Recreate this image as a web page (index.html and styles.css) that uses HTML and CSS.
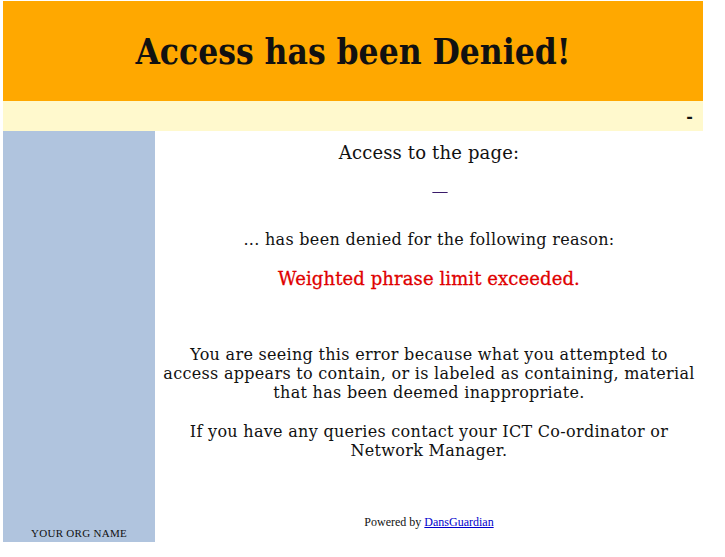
FILE: index.html
```html
<!DOCTYPE html>
<html>
<head>
<meta charset="utf-8">
<title>Access Denied</title>
<link rel="stylesheet" href="styles.css">
</head>
<body>
<div class="page">
  <header class="banner"><h1 class="title">Access has been Denied!</h1></header>
  <div class="userbar"><span class="user">-</span></div>
  <aside class="side"><span class="org">YOUR ORG NAME</span></aside>
  <main class="content">
    <p class="line first">Access to the page:</p>
    <p class="urlline"><a class="url" href="#">&nbsp;&nbsp;&nbsp;&nbsp;</a></p>
    <p class="line denied">... has been denied for the following reason:</p>
    <p class="reason">Weighted phrase limit exceeded.</p>
    <p class="line para">You are seeing this error because what you attempted to access appears to contain, or is labeled as containing, material that has been deemed inappropriate.</p>
    <p class="line para2">If you have any queries contact your ICT Co-ordinator or Network Manager.</p>
    <p class="powered">Powered by <a href="#">DansGuardian</a></p>
  </main>
</div>
</body>
</html>
```

FILE: styles.css
```css
html, body {
  margin: 0;
  padding: 0;
  background: #ffffff;
}
body {
  font-family: "DejaVu Serif", serif;
  color: #111;
}
.page {
  margin: 1px 0 0 3px;
  width: 700px;
  display: grid;
  grid-template-columns: 152px 548px;
  grid-template-rows: 100px 30px 411px;
}
.banner {
  grid-column: 1 / 3;
  background: #ffa800;
  display: flex;
  align-items: center;
  justify-content: center;
}
.title {
  margin: 0;
  font-family: "DejaVu Serif Condensed", "DejaVu Serif", serif;
  font-stretch: condensed;
  font-weight: bold;
  font-size: 35px;
  color: #111;
}
.userbar {
  grid-column: 1 / 3;
  background: #fff9cd;
  display: flex;
  align-items: center;
  justify-content: flex-end;
  padding-right: 10px;
  font-size: 16px;
  font-weight: bold;
}
.side {
  background: #b0c4de;
  display: flex;
  align-items: flex-end;
  justify-content: center;
  padding-bottom: 3px;
}
.org {
  font-family: "Liberation Serif", serif;
  font-size: 11px;
  letter-spacing: 0.3px;
  color: #111;
}
.content {
  display: flex;
  flex-direction: column;
  align-items: center;
  text-align: center;
  padding: 12px 6px 0;
}
.line {
  margin: 0;
  font-size: 16px;
  line-height: 19px;
  letter-spacing: 0.3px;
}
.first {
  margin-top: 0;
  font-size: 18px;
  letter-spacing: 0.15px;
}
.urlline {
  margin: 16px 0 0;
  height: 22px;
  line-height: 19px;
  font-size: 12px;
}
.url {
  color: #3a1a6a;
  text-decoration: underline;
  margin-left: 22px;
}
.denied {
  margin-top: 30px;
}
.reason {
  margin: 19px 0 0;
  font-size: 18px;
  line-height: 22px;
  color: #e00000;
  letter-spacing: 0.1px;
  -webkit-text-stroke: 0.3px #e00000;
}
.para {
  margin-top: 55px;
}
.para2 {
  margin-top: 20px;
}
.powered {
  margin: 55px 0 0;
  font-family: "Liberation Serif", serif;
  font-size: 12px;
}
.powered a {
  color: #0000cc;
}
```
